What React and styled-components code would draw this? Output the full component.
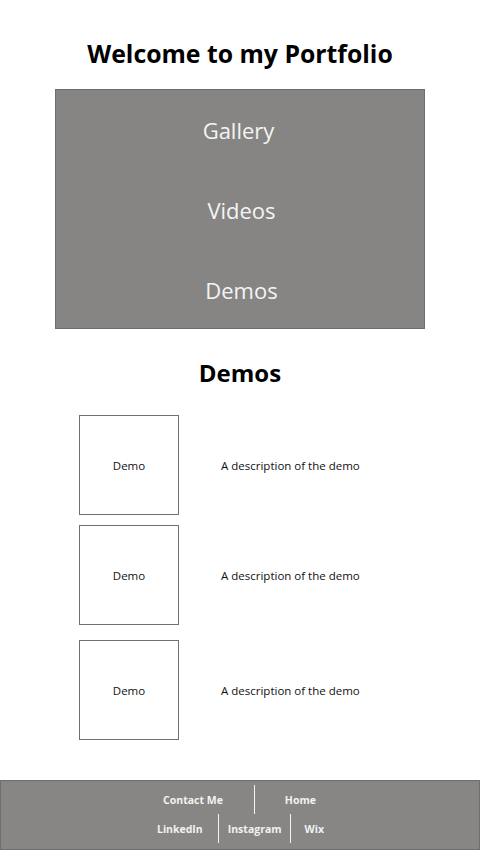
import React from 'react'
import styled, { createGlobalStyle } from 'styled-components'

const GlobalStyle = createGlobalStyle`
  body {
    margin: 0;
    background: #fff;
    font-family: 'Open Sans', 'Noto Sans', sans-serif;
  }
`

const Page = styled.div`
  width: 480px;
  min-height: 850px;
  display: flex;
  flex-direction: column;
`

const Title = styled.h1`
  margin: 36px 0 0;
  font-size: 24.8px;
  line-height: 34px;
  font-weight: 700;
  text-align: center;
  color: #000;
`

const NavBox = styled.nav`
  box-sizing: border-box;
  margin: 19px 0 0 55px;
  width: 370px;
  height: 240px;
  background: #868583;
  border: 1px solid #6e6e6e;
  display: flex;
  flex-direction: column;
  align-items: center;
  gap: 44px;
  padding-top: 22px;
`

const NavItem = styled.a`
  font-size: 22px;
  line-height: 36px;
  color: #f4f4f4;
  text-decoration: none;
  margin-left: ${p => p.$shift || 0}px;
`

const SectionTitle = styled.h2`
  margin: 27px 0 0;
  font-size: 24px;
  line-height: 34px;
  font-weight: 700;
  text-align: center;
  color: #000;
`

const DemoList = styled.div`
  margin: 25px 0 0 79px;
  display: flex;
  flex-direction: column;
`

const DemoRow = styled.div`
  display: flex;
  align-items: center;
  margin-top: ${p => p.$gap || 0}px;
`

const DemoBox = styled.div`
  width: 98px;
  height: 98px;
  border: 1px solid #707070;
  display: flex;
  align-items: center;
  justify-content: center;
  font-size: 11.5px;
  color: #111;
`

const DemoText = styled.p`
  margin: 0 0 0 42px;
  font-size: 11.5px;
  color: #111;
`

const Footer = styled.footer`
  box-sizing: border-box;
  margin-top: auto;
  height: 70px;
  background: #878684;
  border: 1px solid #6e6e6e;
  display: flex;
  flex-direction: column;
  align-items: center;
  padding-top: 4px;
`

const FooterRow = styled.div`
  display: flex;
  height: 29px;
`

const FooterLink = styled.a`
  display: flex;
  align-items: center;
  padding: 0 ${p => p.$pr}px 0 ${p => p.$pl}px;
  font-size: 10.5px;
  font-weight: 700;
  color: #f2f2f2;
  text-decoration: none;
  border-left: ${p => (p.$sep ? '1px solid #f4f4f4' : 'none')};
`

const demos = [0, 10, 15]

export default function App() {
  return (
    <Page>
      <GlobalStyle />
      <Title>Welcome to my Portfolio</Title>
      <NavBox>
        <NavItem href="#" $shift={-3}>Gallery</NavItem>
        <NavItem href="#" $shift={3}>Videos</NavItem>
        <NavItem href="#" $shift={3}>Demos</NavItem>
      </NavBox>
      <SectionTitle>Demos</SectionTitle>
      <DemoList>
        {demos.map((gap, i) => (
          <DemoRow key={i} $gap={gap}>
            <DemoBox>Demo</DemoBox>
            <DemoText>A description of the demo</DemoText>
          </DemoRow>
        ))}
      </DemoList>
      <Footer>
        <FooterRow>
          <FooterLink href="#" $pl={30} $pr={31}>Contact Me</FooterLink>
          <FooterLink href="#" $pl={30} $pr={31} $sep>Home</FooterLink>
        </FooterRow>
        <FooterRow>
          <FooterLink href="#" $pl={17} $pr={15}>LinkedIn</FooterLink>
          <FooterLink href="#" $pl={9} $pr={8} $sep>Instagram</FooterLink>
          <FooterLink href="#" $pl={14} $pr={16} $sep>Wix</FooterLink>
        </FooterRow>
      </Footer>
    </Page>
  )
}
